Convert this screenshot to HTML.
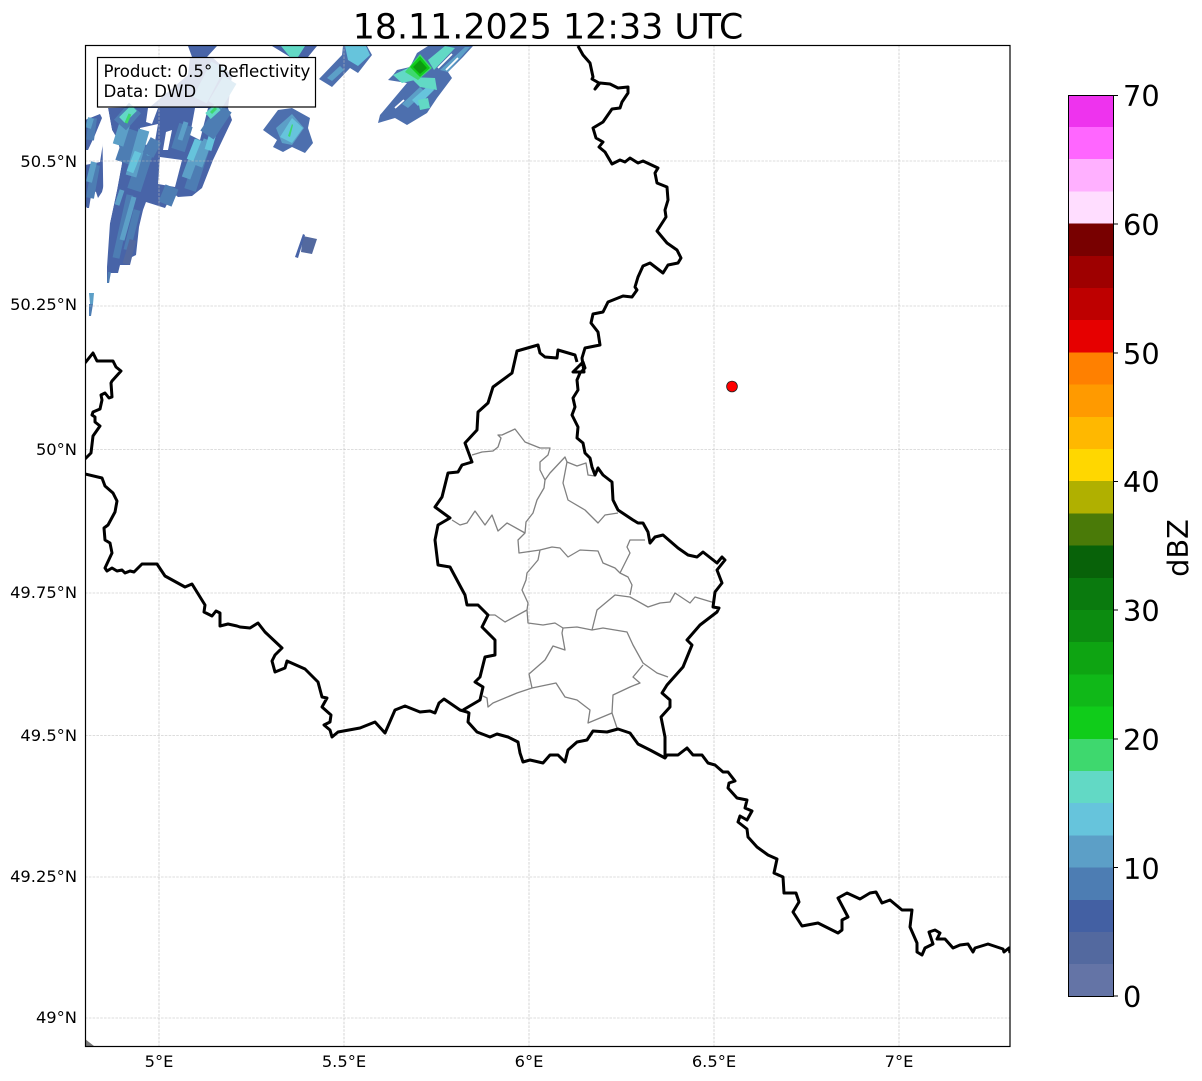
<!DOCTYPE html>
<html><head><meta charset="utf-8"><style>html,body{margin:0;padding:0;background:#fff}svg{display:block}text{font-family:"DejaVu Sans","Liberation Sans",sans-serif;fill:#000}</style></head><body>
<svg width="1202" height="1081" viewBox="0 0 1202 1081" xmlns="http://www.w3.org/2000/svg">
<defs><clipPath id="c"><rect x="85" y="45" width="925" height="1001"/></clipPath></defs>
<g clip-path="url(#c)">
<!-- radar silhouettes -->
<g fill="#4864a8">
<polygon points="107,283 109,283 110,273 118,273 120,265 130,265 132,257 136,255 139,227 143,210 146,202 165,208 173,193 178,197 192,196 202,188 213,160 232,120 228,108 232,75 212,57 190,57 188,75 150,107 108,108 112,130 118,140 122,163 117,190 110,223 107,267"/>
<polygon points="85,120 100,114 102,118 95,135 88,150 85,150"/>
<polygon points="85,165 100,162 103,143 107,143 108,150 105,180 102,192 98,198 96,192 92,190 89,208 87,208 85,205"/>
<polygon fill="#4d6fae" points="263,130 278,110 292,108 310,118 308,128 313,143 305,153 292,147 283,152 273,147 277,140"/>
<polygon fill="#4d6fae" points="319,79 342,55 343,46 367,46 372,55 358,73 350,68 332,87"/>
<polygon fill="#4d6fae" points="378,123 380,115 407,83 388,80 393,75 397,70 410,67 417,53 428,46 473,46 463,57 448,72 452,78 437,98 427,113 407,125 395,118"/>
<polygon points="188,46 217,46 207,57 192,57"/>
<polygon points="272,46 317,46 308,57 290,57"/>
<polygon fill="#53699f" points="303,236 317,239 312,254 301,252"/>
<polygon points="303,234 305,235 298,258 295,257"/>
<polygon fill="#5c9fc7" points="89,293 94,293 93,304 90,304"/>
<polygon fill="#4d7db3" points="89,304 93,304 91,316 89,316"/>
<polygon fill="#4d7db3" points="107,283 109,283 111,272 108,272"/>
</g>
<!-- holes -->
<g fill="#fff">
<polygon points="140,128 158,124 154,147 140,143"/>
<polygon points="160,157 182,160 175,187 158,184"/>
<polygon points="148,108 158,108 152,124 146,122"/>
<polygon points="195,108 208,108 200,140 190,135"/>
<polygon points="102,108 108,108 112,130 118,140 122,163 117,190 110,223 104,240"/>
<polygon points="166,132 172,130 168,150 163,150"/>
</g>
<g fill="none" stroke-linecap="butt">
<!-- left strip -->
<path stroke="#4d7db3" stroke-width="8" d="M90 198L96 165M90 140L93 118"/>
<path stroke="#5c9fc7" stroke-width="6" d="M89 182L94 162M88 128L91 118"/>
<!-- main lower swath -->
<path stroke="#4d7db3" stroke-width="7" d="M116 258L130 195M127 250L137 210"/>
<path stroke="#53699f" stroke-width="7" d="M126 264L133 240"/>
<path stroke="#5c9fc7" stroke-width="5" d="M122 240L134 197M117 205L122 190"/>
<path stroke="#4d7db3" stroke-width="14" d="M134 190L147 150M122 162L133 130M165 204L172 187M178 150L186 125"/>
<path stroke="#5c9fc7" stroke-width="11" d="M131 176L144 130M118 145L126 120"/>
<path stroke="#5c9fc7" stroke-width="5" d="M180 140L186 122"/>
<path stroke="#66c4dc" stroke-width="7" d="M130 172L138 152M124 126L130 110M150 156L155 140"/>
<!-- upper swath -->
<path stroke="#4d7db3" stroke-width="12" d="M190 190L203 150M148 155L156 140"/>
<path stroke="#5c9fc7" stroke-width="9" d="M186 178L200 140M198 166L208 140"/>
<path stroke="#66c4dc" stroke-width="7" d="M190 160L198 140M208 150L214 130"/>
<path stroke="#4d7db3" stroke-width="16" d="M120 125L135 108M207 135L225 108"/>
<path stroke="#62d9c5" stroke-width="8" d="M122 120L134 108M208 116L218 107"/>
<path stroke="#3ed86e" stroke-width="3" d="M126 123L130 114M211 113L216 108"/>
<path stroke="#5c9fc7" stroke-width="15" d="M200 100L218 65M215 105L230 80"/>
</g>
<g>
<polygon fill="#62d9c5" points="281,46 305,46 298,57 290,57"/>
<polygon fill="#5c9fc7" points="276,128 292,114 304,128 292,145 282,143"/>
<polygon fill="#66c4dc" points="280,137 292,118 303,128 292,143"/>
<polygon fill="#3ed86e" points="288,136 292,124 293,125 290,137"/>
<polygon fill="#5c9fc7" points="327,78 340,66 344,70 332,81"/>
<polygon fill="#66c4dc" points="345,46 366,46 370,55 358,66 348,60"/>
<polygon fill="#5c9fc7" points="402,104 420,87 425,92 408,108"/>
<polygon fill="#5c9fc7" points="440,70 465,47 470,47 448,72"/>
<polygon fill="#66c4dc" points="412,100 430,84 434,90 418,106"/>
<polygon fill="#62d9c5" points="393,75 408,68 415,80 402,83"/>
<polygon fill="#62d9c5" points="410,77 435,78 437,90 420,87"/>
<polygon fill="#62d9c5" points="418,100 428,98 430,108 420,110"/>
<polygon fill="#62d9c5" points="428,60 445,46 455,48 434,70"/>
<polygon fill="#3ed86e" points="405,72 420,54 432,68 418,80"/>
<polygon fill="#10cc1a" points="410,67 420,56 430,68 420,77"/>
<polygon fill="#0c9a10" points="413,67 420,60 427,68 420,74"/>
<path fill="none" stroke="#fff" stroke-width="1.800" d="M438 68L452 54M446 70L458 58M395 108L404 100"/>
</g>
<polygon points="85,1039 94,1046 85,1046" fill="#777"/>
<!-- grid -->
<path fill="none" stroke="#bbb" stroke-width="0.600" stroke-dasharray="2.600 1.200" d="M159 45V1046M344 45V1046M529 45V1046M714 45V1046M899 45V1046M85 161H1010M85 306H1010M85 449.500H1010M85 593H1010M85 735.500H1010M85 877H1010M85 1018H1010"/>
<!-- internal borders -->
<g fill="none" stroke="#808080" stroke-width="1.300" stroke-linejoin="round">
<path d="M472 455L482 452L493 451L498 447L501 438L498 435L502 435L515 429L525 442L540 448L550 448L548 455L540 462L540 470L545 480L544 488L537 500L533 513L526 522L525 533L518 540L519 553L540 550L552 547L560 548L568 557L580 550L598 551L603 563L615 568L620 573L628 577L632 585L630 595"/>
<path d="M545 480L550 473L565 457L567 462L577 466L586 463L588 475L595 476"/>
<path d="M567 462L563 483L568 500L585 510L598 523L605 515L618 513"/>
<path d="M452 520L460 525L467 523L475 511L485 525L492 515L498 531L507 523L525 533"/>
<path d="M620 573L630 553L627 547L630 540L645 540"/>
<path d="M540 550L538 560L527 573L526 580L522 590L528 603L527 610L528 623L543 625L555 623L563 628L577 627L592 630L603 628L627 632L633 645L643 663L657 673L668 677"/>
<path d="M527 610L505 622L495 615L488 615"/>
<path d="M563 628L562 633L565 650L553 646L545 660L529 674L532 688L517 693L493 703L488 707L487 698L483 696"/>
<path d="M532 688L556 683L565 697L577 700L590 710L588 723L612 713L617 728"/>
<path d="M612 713L613 695L630 687L640 683L633 677L643 665"/>
<path d="M592 630L597 610L615 595L630 597L648 607L660 603L670 602L675 593L690 603L695 597L715 603"/>
</g>
<!-- outer borders -->
<g fill="none" stroke="#000" stroke-width="3" stroke-linejoin="round">
<path d="M85 363L93 353L97 361L113 361L116 367L121 371L112 381L111 383L112 397L109 398L105 393L101 395L102 400L100 409L93 412L92 415L95 417L95 422L100 426L93 436L91 453L85 459"/>
<path d="M85 474L102 478L105 486L113 493L117 501L115 512L108 525L104 528L105 540L110 543L112 553L105 568L107 571L112 568L117 571L122 570L125 573L130 571L134 572L138 568L142 564L157 564L165 576L185 587L192 584L205 605L204 612L212 616L216 611L220 613L220 626L228 624L237 626L240 627L250 628L258 623L265 632L282 648L275 655L272 661L275 672L285 668L287 661L305 669L318 682L322 697L327 698L322 707L331 715L330 722L324 725L330 730L332 737L338 732L360 728L375 722L385 733L395 710L405 706L420 712L430 711L435 713L439 703L444 699L460 710L467 712L469 713L468 722L477 732L490 737L497 734L508 737L518 742L520 753L523 762L530 760L543 763L550 755L558 755L565 762L568 750L577 742L587 740L593 731L607 732L618 729L630 733L638 744L650 750L665 758L667 755L678 755L687 748L693 755L702 755L708 763L715 765L723 772L728 772L735 781L729 783L728 788L737 798L747 800L745 808L752 811L747 820L740 816L738 822L747 829L748 837L757 847L768 855L777 859L774 873L783 877L784 893L796 893L799 902L793 912L802 926L818 923L838 933L842 930L842 920L848 917L838 898L847 893L860 899L870 893L876 892L882 903L890 900L902 910L912 910L910 927L917 943L917 952L922 955L925 948L933 944L929 932L935 930L940 933L937 939L945 939L953 948L960 945L968 944L973 952L975 948L988 944L1003 949L1004 952L1009 948L1010 953"/>
<path d="M665 758L665 737L661 717L670 707L670 700L662 693L667 685L683 667L692 645L687 640L700 625L717 612L719 608L713 607L715 592L722 583L717 570L725 560L722 557L717 563L703 552L697 557L688 555L678 548L663 535L655 537L650 543L648 532L643 523L638 523L633 520L618 510L613 500L612 482L603 475L598 468L595 475L592 467L590 458L585 453L583 443L577 438L578 427L572 415L575 407L573 398L578 390L577 380L580 373L585 368L583 362L573 372L584 372L582 358L585 348L600 345L598 332L591 323L593 314L603 312L608 302L623 296L632 297L637 290L635 287L638 277L643 266L650 263L663 273L668 265L678 263L681 258L677 250L667 243L657 231L666 217L665 210L668 200L667 187L657 183L655 173L658 168L643 161L638 163L630 158L625 162L620 160L612 164L605 152L599 147L603 142L596 138L593 128L603 122L612 109L620 108L622 102L628 93L628 87L618 88L610 84L600 83L595 89L599 83L592 79L593 77L590 63L583 55L578 46"/>
<path d="M577 362L575 355L558 350L557 358L545 357L540 353L538 345L517 351L512 373L493 387L488 403L478 412L477 430L465 443L472 462L462 465L458 472L448 473L442 497L435 507L450 518L438 525L435 540L438 565L450 567L465 595L467 605L478 605L488 615L482 627L495 640L495 655L485 657L480 677L475 682L483 687L480 700L463 710"/>
</g>
<circle cx="732" cy="386.500" r="5.400" fill="#f00" stroke="#222" stroke-width="0.800"/>
<!-- legend -->
<rect x="97.500" y="57.500" width="218" height="49.500" fill="#fff" fill-opacity="0.82" stroke="#000" stroke-width="1.200"/>
<text x="103.500" y="77" font-size="16.640">Product: 0.5° Reflectivity</text>
<text x="103.500" y="97" font-size="16.640">Data: DWD</text>
</g>
<rect x="85.500" y="45.500" width="924.500" height="1001" fill="none" stroke="#000" stroke-width="1.200"/>
<text x="548" y="38.500" font-size="34.800" text-anchor="middle">18.11.2025 12:33 UTC</text>
<g font-size="16.300" text-anchor="middle">
<text x="159" y="1067">5°E</text><text x="344" y="1067">5.5°E</text><text x="529" y="1067">6°E</text><text x="714" y="1067">6.5°E</text><text x="899" y="1067">7°E</text>
</g>
<g font-size="16.300" text-anchor="end">
<text x="77" y="167">50.5°N</text><text x="77" y="310">50.25°N</text><text x="77" y="455">50°N</text><text x="77" y="598">49.75°N</text><text x="77" y="741">49.5°N</text><text x="77" y="882">49.25°N</text><text x="77" y="1023">49°N</text>
</g>
<!-- colorbar -->
<g shape-rendering="crispEdges">
<rect x="1068" y="963.800" width="45" height="32.600" fill="#6474a6"/>
<rect x="1068" y="931.600" width="45" height="32.600" fill="#53699f"/>
<rect x="1068" y="899.400" width="45" height="32.600" fill="#4360a3"/>
<rect x="1068" y="867.200" width="45" height="32.600" fill="#4d7db3"/>
<rect x="1068" y="835" width="45" height="32.600" fill="#5c9fc7"/>
<rect x="1068" y="802.800" width="45" height="32.600" fill="#66c4dc"/>
<rect x="1068" y="770.600" width="45" height="32.600" fill="#62d9c5"/>
<rect x="1068" y="738.400" width="45" height="32.600" fill="#3ed86e"/>
<rect x="1068" y="706.200" width="45" height="32.600" fill="#10cc1a"/>
<rect x="1068" y="674" width="45" height="32.600" fill="#10b818"/>
<rect x="1068" y="641.800" width="45" height="32.600" fill="#0ea412"/>
<rect x="1068" y="609.600" width="45" height="32.600" fill="#0c8c10"/>
<rect x="1068" y="577.400" width="45" height="32.600" fill="#0a7a0e"/>
<rect x="1068" y="545.200" width="45" height="32.600" fill="#086209"/>
<rect x="1068" y="513" width="45" height="32.600" fill="#4a7a08"/>
<rect x="1068" y="480.800" width="45" height="32.600" fill="#b0b000"/>
<rect x="1068" y="448.600" width="45" height="32.600" fill="#ffd700"/>
<rect x="1068" y="416.400" width="45" height="32.600" fill="#ffb800"/>
<rect x="1068" y="384.200" width="45" height="32.600" fill="#ff9a00"/>
<rect x="1068" y="352" width="45" height="32.600" fill="#ff8000"/>
<rect x="1068" y="319.800" width="45" height="32.600" fill="#e60000"/>
<rect x="1068" y="287.600" width="45" height="32.600" fill="#be0000"/>
<rect x="1068" y="255.400" width="45" height="32.600" fill="#9e0000"/>
<rect x="1068" y="223.200" width="45" height="32.600" fill="#780000"/>
<rect x="1068" y="191" width="45" height="32.600" fill="#ffddff"/>
<rect x="1068" y="158.800" width="45" height="32.600" fill="#ffb0ff"/>
<rect x="1068" y="126.600" width="45" height="32.600" fill="#ff66ff"/>
<rect x="1068" y="95" width="45" height="32" fill="#ee33ee"/>
</g>
<rect x="1068.500" y="95.500" width="45" height="901" fill="none" stroke="#000" stroke-width="1"/>
<path stroke="#000" stroke-width="1" d="M1113 95.500h5M1113 224h5M1113 353h5M1113 481.500h5M1113 610h5M1113 739h5M1113 867.500h5M1113 996h5"/>
<g font-size="28.800">
<text x="1123" y="106">70</text><text x="1123" y="235">60</text><text x="1123" y="364">50</text><text x="1123" y="492">40</text><text x="1123" y="621">30</text><text x="1123" y="750">20</text><text x="1123" y="879">10</text><text x="1123" y="1007">0</text>
</g>
<text transform="translate(1188,548) rotate(-90)" font-size="28.800" text-anchor="middle">dBZ</text>
</svg>
</body></html>
